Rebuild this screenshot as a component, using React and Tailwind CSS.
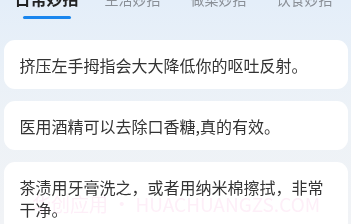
import React from 'react';

const TABS = ['日常妙招', '生活妙招', '做菜妙招', '饮食妙招'];

const TIPS = [
  '挤压左手拇指会大大降低你的呕吐反射。',
  '医用酒精可以去除口香糖,真的有效。',
  '茶渍用牙膏洗之，或者用纳米棉擦拭，非常干净。',
];

export default function App() {
  return (
    <div
      className="relative h-[224px] w-[351px] overflow-hidden bg-gradient-to-b from-[#e4eef9] via-[#edf2f7] to-[#f1f3f6]"
      style={{ fontFamily: '"Noto Sans CJK SC", "Noto Sans", sans-serif' }}
    >
      <div className="mx-auto w-[344px]">
        {/* 顶部分类 tab */}
        <div className="-mt-[12px] flex items-baseline">
          {TABS.map((tab, i) => (
            <div key={tab} className="flex w-[86px] flex-col items-center">
              {i === 0 ? (
                <span className="text-[16px] font-bold leading-[20px] text-[#222]">{tab}</span>
              ) : (
                <span className="text-[14px] leading-[20px] text-[#8a8f96]">{tab}</span>
              )}
              <div className={`mt-[8px] h-[3px] w-[48px] rounded-full ${i === 0 ? 'bg-[#1a86ee]' : 'bg-transparent'}`} />
            </div>
          ))}
        </div>

        {/* 妙招列表 */}
        <div className="mt-[20px] flex flex-col gap-[12px]">
          {TIPS.map(tip => (
            <div key={tip} className="rounded-[11px] bg-white px-4 pb-[13px] pt-[14px] text-[16px] leading-[22px] text-[#333]">
              {tip}
            </div>
          ))}
        </div>
      </div>

      {/* 水印 */}
      <div
        className="pointer-events-none absolute left-[32px] top-[192px] whitespace-nowrap text-[19px] leading-[24px] text-[#fde8f5] opacity-70 mix-blend-multiply"
      >
        华创应用 • HUACHUANGZS.COM
      </div>
    </div>
  );
}
